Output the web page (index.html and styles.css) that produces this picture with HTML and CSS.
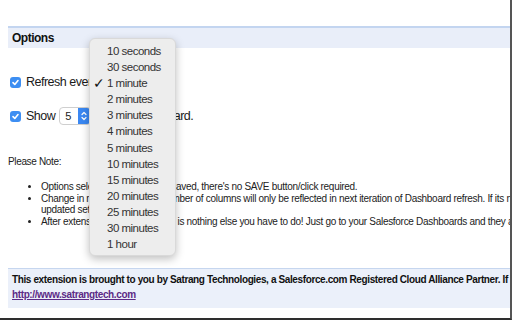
FILE: index.html
```html
<!DOCTYPE html>
<html lang="en">
<head>
    <meta charset="UTF-8">
    <title>Options</title>
    <link rel="stylesheet" href="styles.css">
</head>
<body>
    <div class="page">
        <div class="section-title">Options</div>

        <div class="option">
            <span class="check"><svg width="11" height="11" viewBox="0 0 11 11"><path d="M3 5.6 L4.8 7.4 L8 3.6" fill="none" stroke="#fff" stroke-width="1.6" stroke-linecap="round" stroke-linejoin="round"/></svg></span>
            <span class="label">Refresh every</span>
        </div>

        <div class="option">
            <span class="check"><svg width="11" height="11" viewBox="0 0 11 11"><path d="M3 5.6 L4.8 7.4 L8 3.6" fill="none" stroke="#fff" stroke-width="1.6" stroke-linecap="round" stroke-linejoin="round"/></svg></span>
            <span class="label">Show</span>
            <span class="select">
                <span class="select-value">5</span>
                <span class="select-arrows"><svg width="12" height="16" viewBox="0 0 12 16"><path d="M4 6.5 L6 4.5 L8 6.5 M4 9.5 L6 11.5 L8 9.5" fill="none" stroke="#fff" stroke-width="1.2" stroke-linecap="round" stroke-linejoin="round"/></svg></span>
            </span>
            <span class="label">columns per board.</span>
        </div>

        <p class="note-title">Please Note:</p>
        <ul class="notes">
            <li>Options selected here are auto saved, there's no SAVE button/click required.</li>
            <li>Change in refresh interval or number of columns will only be reflected in next iteration of Dashboard refresh. If its not reflected, reload the page to see the<br>updated settings in action.</li>
            <li>After extension is installed, there is nothing else you have to do! Just go to your Salesforce Dashboards and they auto refresh.</li>
        </ul>

        <div class="footer">
            <div>This extension is brought to you by Satrang Technologies, a Salesforce.com Registered Cloud Alliance Partner. If you need help, please visit</div>
            <a href="#" class="footer-link">http://www.satrangtech.com</a>
        </div>

        <div class="menu">
            <div class="menu-item">10 seconds</div>
            <div class="menu-item">30 seconds</div>
            <div class="menu-item selected">1 minute</div>
            <div class="menu-item">2 minutes</div>
            <div class="menu-item">3 minutes</div>
            <div class="menu-item">4 minutes</div>
            <div class="menu-item">5 minutes</div>
            <div class="menu-item">10 minutes</div>
            <div class="menu-item">15 minutes</div>
            <div class="menu-item">20 minutes</div>
            <div class="menu-item">25 minutes</div>
            <div class="menu-item">30 minutes</div>
            <div class="menu-item">1 hour</div>
        </div>
    </div>
</body>
</html>
```

FILE: styles.css
```css
body {
    margin: 0;
    background: #fff;
    font-family: "Liberation Sans", Arial, sans-serif;
    color: #222;
}
.page {
    position: relative;
    width: 512px;
    height: 320px;
    box-sizing: border-box;
    padding: 26px 0 0 8px;
    border-right: 2px solid #555;
    border-bottom: 2px solid #2e2e2e;
    overflow: hidden;
}
.section-title {
    height: 20px;
    line-height: 21px;
    padding-left: 4px;
    border-top: 2px solid #c3d5f0;
    background: #e9eef9;
    font-size: 12px;
    letter-spacing: -0.5px;
    font-weight: bold;
    color: #111;
}
.option {
    display: flex;
    align-items: center;
    height: 20px;
    margin-top: 24px;
    padding-left: 2px;
    font-size: 12.5px;
    letter-spacing: -0.5px;
}
.option + .option {
    margin-top: 14px;
}
.check {
    display: flex;
    width: 11px;
    height: 11px;
    margin-right: 5px;
    border-radius: 3px;
    background: #3d8ef2;
}
.label {
    color: #1a1a1a;
}
.select {
    display: flex;
    height: 18px;
    width: 32px;
    margin: 0 4px;
    box-sizing: border-box;
    border: 1px solid #cfcfcf;
    border-radius: 4px;
    overflow: hidden;
    background: #fff;
}
.select-value {
    flex: 1;
    padding-left: 5px;
    font-size: 11px;
    line-height: 16px;
}
.select-arrows {
    display: flex;
    width: 12px;
    background: #3a88f3;
}
.note-title {
    margin: 29px 0 0;
    font-size: 10px;
    letter-spacing: -0.35px;
    line-height: 13px;
}
.notes {
    margin: 13px 0 0;
    padding-left: 33px;
    font-size: 10px;
    letter-spacing: -0.3px;
    line-height: 11.5px;
    white-space: nowrap;
}
.footer {
    margin-top: 41px;
    padding: 3px 4px 6px;
    border-top: 1px solid #c6d6ef;
    background: #ebf0fa;
    font-size: 10px;
    font-weight: bold;
    letter-spacing: -0.38px;
    line-height: 15px;
    color: #111;
    white-space: nowrap;
}
.footer-link {
    color: #5b2a86;
}
.menu {
    position: absolute;
    left: 89px;
    top: 38px;
    width: 87px;
    height: 218px;
    box-sizing: border-box;
    padding-top: 4px;
    border-radius: 6px;
    background: #ededed;
    border: 1px solid #d9d9d9;
    box-shadow: 0 3px 8px rgba(0, 0, 0, 0.25);
}
.menu-item {
    position: relative;
    padding-left: 17px;
    height: 16.1px;
    line-height: 16px;
    font-size: 11.5px;
    letter-spacing: -0.5px;
    color: #333;
}
.menu-item.selected::before {
    content: "\2713";
    position: absolute;
    left: 3px;
    font-size: 14px;
    color: #111;
}
```
